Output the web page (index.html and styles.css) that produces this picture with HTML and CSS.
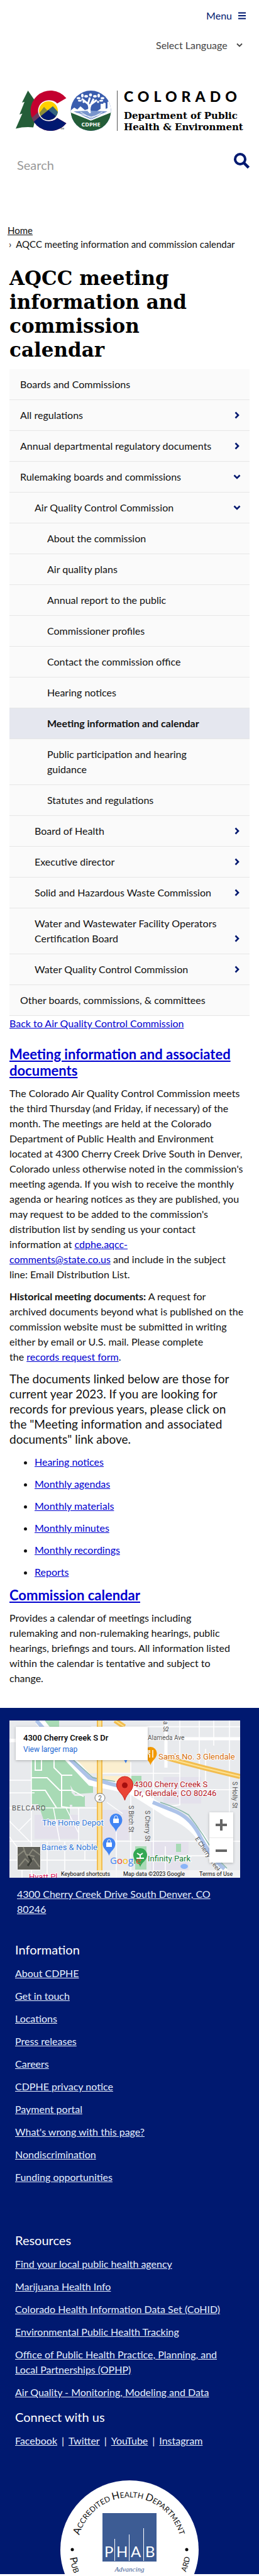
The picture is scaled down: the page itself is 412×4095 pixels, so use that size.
FILE: index.html
```html
<!DOCTYPE html>
<html lang="en">
<head>
<meta charset="utf-8">
<meta name="viewport" content="width=device-width, initial-scale=1">
<title>AQCC meeting information and commission calendar</title>
<link rel="stylesheet" href="styles.css">
</head>
<body>
<svg width="0" height="0" class="sprite" aria-hidden="true">
  <symbol id="right" viewBox="0 0 12 12"><path d="M3.5 1.5 8 6l-4.500 4.500" fill="none" stroke="#001970" stroke-width="2.600"/></symbol>
  <symbol id="down" viewBox="0 0 12 12"><path d="M1.500 3.500 6 8l4.500-4.500" fill="none" stroke="#001970" stroke-width="2.600"/></symbol>
</svg>
<header class="top">
  <button class="menu-btn" type="button">Menu
    <svg viewBox="0 0 12 12" width="12" height="12" aria-hidden="true"><path d="M0 1.500h12M0 6h12M0 10.500h12" stroke="#001970" stroke-width="2"/></svg>
  </button>
  <div class="lang">
    <select aria-label="Select Language"><option>Select Language</option></select>
    <svg viewBox="0 0 10 8" width="10" height="8" aria-hidden="true"><path d="M1 1.500 5 5.500l4-4" fill="none" stroke="#444" stroke-width="1.800"/></svg>
  </div>
  <a class="logo" href="#" aria-label="Colorado Department of Public Health and Environment">
    <svg viewBox="0 0 364 64">
      <defs>
        <clipPath id="cc"><path d="M80.500 12A32 32 0 1 0 80.500 52L66 43.500A16.500 16.500 0 1 1 66 20.500Z"/></clipPath>
        <clipPath id="sun"><circle cx="52" cy="32" r="15"/></clipPath>
        <clipPath id="seal"><circle cx="119.500" cy="32" r="32"/></clipPath>
      </defs>
      <path d="M19.500 0 10 19l4-1-8 20 4.500-1.500L0 60.500q14-3.500 28-2L36 24Z" fill="#245d38"/>
      <g clip-path="url(#cc)">
        <rect x="18" width="66" height="64" fill="#c3002f"/>
        <path d="M18 50 38 32v32H18Z" fill="#6d3a5d"/>
        <path d="M26 52 42 38 85 43v21H18Z" fill="#001970"/>
      </g>
      <circle cx="52" cy="32" r="16.500" fill="#fff"/>
      <g clip-path="url(#sun)">
        <rect x="36" y="16" width="32" height="32" fill="#ffd100"/>
        <path d="M34 40 45 26l6 6 8-7 12 13v12H34Z" fill="#8a8d3b"/>
        <path d="m50 32 9-7 12 13v8Z" fill="#35647e"/>
        <path d="m34 45 18-14 18 15v6H34Z" fill="#001970"/>
      </g>
      <text x="71" y="62" class="tm">TM</text>
      <g clip-path="url(#seal)">
        <rect x="87" width="65" height="64" fill="#3a5dae"/>
        <path d="m87 32 6-5 5 3 5-5 7 6 6-2 5 4h8l6-4v-8h4l1-2 3 1v9l3-1V18l5-2v15l4 1v6l-33 12-35-12Z" fill="#fff"/>
        <path d="m92 33 27-1 27 1-26 13Z" fill="#7895cc"/>
        <path d="m98 36 22 6 22-6M103 34l17 10 18-10" stroke="#fff" stroke-width="1" fill="none"/>
        <path d="M116 34q2-9-1-13l-10-8m10 8 3-10m0 12 11-8m-9 6 4-8m-6 23q-2-10 3-16" stroke="#fff" stroke-width="3" fill="none"/>
        <g fill="#fff"><ellipse cx="100" cy="12" rx="3" ry="1.800"/><ellipse cx="106" cy="8" rx="2" ry="3"/><ellipse cx="112" cy="9" rx="3" ry="2"/><circle cx="119" cy="7" r="2.400"/><ellipse cx="126" cy="9" rx="3" ry="2"/><ellipse cx="132" cy="8" rx="2" ry="3"/><ellipse cx="138" cy="12" rx="3" ry="1.800"/><ellipse cx="102" cy="16" rx="3" ry="1.500"/><ellipse cx="136" cy="16" rx="3" ry="1.500"/><circle cx="108" cy="18" r="1.700"/><circle cx="131" cy="18" r="1.700"/></g>
        <path d="m87 34 32.500 13L152 34v30H87Z" fill="#245d38"/>
        <path d="m87 34 32.500 13L152 34" stroke="#fff" stroke-width="1.500" fill="none"/>
      </g>
      <text x="119.500" y="57" text-anchor="middle" class="cdphe">CDPHE</text>
      <path d="M161.500 0v64" stroke="#555"/>
      <text x="172" y="18" class="co">COLORADO</text>
      <text x="172" y="45" class="dept">Department of Public</text>
      <text x="172" y="63" class="dept">Health &amp; Environment</text>
    </svg>
  </a>
  <form class="search">
    <input type="search" placeholder="Search" aria-label="Search">
    <button type="button" aria-label="Submit search"><svg viewBox="0 0 25 25" width="25" height="25"><circle cx="10" cy="10" r="8" fill="none" stroke="#001970" stroke-width="4"/><path d="m16 16 7.500 7.500" stroke="#001970" stroke-width="4.500"/></svg></button>
  </form>
</header>
<main>
  <nav class="crumbs" aria-label="Breadcrumb">
    <a href="#">Home</a>
    <span><b>›</b>AQCC meeting information and commission calendar</span>
  </nav>
  <h1>AQCC meeting<br>information and<br>commission<br>calendar</h1>
  <ul class="tree">
    <li><a href="#">Boards and Commissions</a></li>
    <li><a href="#">All regulations</a><button type="button" aria-label="Expand All regulations"><svg><use href="#right"/></svg></button></li>
    <li><a href="#">Annual departmental regulatory documents</a><button type="button" aria-label="Expand Annual documents"><svg><use href="#right"/></svg></button></li>
    <li><a href="#">Rulemaking boards and commissions</a><button type="button" aria-label="Collapse Rulemaking boards"><svg><use href="#down"/></svg></button></li>
    <li class="l2"><a href="#">Air Quality Control Commission</a><button type="button" aria-label="Collapse Air Quality"><svg><use href="#down"/></svg></button></li>
    <li class="l3"><a href="#">About the commission</a></li>
    <li class="l3"><a href="#">Air quality plans</a></li>
    <li class="l3"><a href="#">Annual report to the public</a></li>
    <li class="l3"><a href="#">Commissioner profiles</a></li>
    <li class="l3"><a href="#">Contact the commission office</a></li>
    <li class="l3"><a href="#">Hearing notices</a></li>
    <li class="l3 current"><a href="#" aria-current="page">Meeting information and calendar</a></li>
    <li class="l3"><a href="#">Public participation and hearing<br>guidance</a></li>
    <li class="l3"><a href="#">Statutes and regulations</a></li>
    <li class="l2"><a href="#">Board of Health</a><button type="button" aria-label="Expand Board of Health"><svg><use href="#right"/></svg></button></li>
    <li class="l2"><a href="#">Executive director</a><button type="button" aria-label="Expand Executive director"><svg><use href="#right"/></svg></button></li>
    <li class="l2"><a href="#">Solid and Hazardous Waste Commission</a><button type="button" aria-label="Expand Solid and Hazardous Waste"><svg><use href="#right"/></svg></button></li>
    <li class="l2"><a href="#">Water and Wastewater Facility Operators<br>Certification Board</a><button type="button" aria-label="Expand Certification Board"><svg><use href="#right"/></svg></button></li>
    <li class="l2"><a href="#">Water Quality Control Commission</a><button type="button" aria-label="Expand Water Quality"><svg><use href="#right"/></svg></button></li>
    <li><a href="#">Other boards, commissions, &amp; committees</a></li>
  </ul>
  <article>
    <a href="#">Back to Air Quality Control Commission</a>
    <h2 class="first"><a href="#">Meeting information and associated<br>documents</a></h2>
    <p>The Colorado Air Quality Control Commission meets<br>the third Thursday (and Friday, if necessary) of the<br>month. The meetings are held at the Colorado<br>Department of Public Health and Environment<br>located at 4300 Cherry Creek Drive South in Denver,<br>Colorado unless otherwise noted in the commission's<br>meeting agenda. If you wish to receive the monthly<br>agenda or hearing notices as they are published, you<br>may request to be added to the commission's<br>distribution list by sending us your contact<br>information at <a href="#">cdphe.aqcc-<br>comments@state.co.us</a> and include in the subject<br>line: Email Distribution List.</p>
    <p><strong>Historical meeting documents:</strong> A request for<br>archived documents beyond what is published on the<br>commission website must be submitted in writing<br>either by email or U.S. mail. Please complete<br>the <a href="#">records request form</a>.</p>
    <p class="note">The documents linked below are those for<br>current year 2023. If you are looking for<br>records for previous years, please click on<br>the "Meeting information and associated<br>documents" link above.</p>
    <ul class="docs">
      <li><a href="#">Hearing notices</a></li>
      <li><a href="#">Monthly agendas</a></li>
      <li><a href="#">Monthly materials</a></li>
      <li><a href="#">Monthly minutes</a></li>
      <li><a href="#">Monthly recordings</a></li>
      <li><a href="#">Reports</a></li>
    </ul>
    <h2><a href="#">Commission calendar</a></h2>
    <p>Provides a calendar of meetings including<br>rulemaking and non-rulemaking hearings, public<br>hearings, briefings and tours. All information listed<br>within the calendar is tentative and subject to<br>change.</p>
  </article>
</main>
<footer>
  <div class="map">
    <svg viewBox="0 0 367 250" preserveAspectRatio="xMidYMid slice">
      <rect width="367" height="250" fill="#e8eaed"/>
      <g fill="#e4e1ec"><path d="M145 142h45v48h-45ZM225 192h60v58h-60ZM40 150h70v38H40ZM245 90h60v42h-60Z"/></g>
      <g fill="#fbefd0"><path d="M108 60h84v24h-84ZM150 88h42v14h-42Z"/></g>
      <g fill="#a8dab5"><path d="M35 63h60l38 38v14l-28 2-8-14 2 12 22 22h-13v-3h-12v-1v24H54l-8-24H35ZM57 0h22v11H57ZM192 88h18v14h-18ZM200 200h18v37h-18ZM265 196h8v13h-8ZM100 120h20v17h-20Z"/></g>
      <g fill="none" stroke="#fff" stroke-width="2">
        <path d="M35 63v187M0 139h142M142 84h130M0 222h142M0 192h367M193 66v184M229 54v196M250 0v50M271 84v50l-25 4M302 0v110M350 0v190M271 0v84M325 0v40M312 45v60M0 30h15M0 95h35M0 115h40M130 10h237M215 110h150M240 215h80M248 200v50M70 139l10 53M90 139l20 40M110 139v53M88 192v58M15 175l20-20M0 160l35 35M0 185l30 40M20 222v28M120 192v30M60 192v58M155 130l25 18M170 150v100" stroke-width="1.500"/>
        <path d="M41 63v16h10V63M71 63v12l12 12h17M35 91h25l20 20h20l18 10M83 87v50l14 2M35 111h22l18 28"/>
        <path d="M190 29h177M0 32h12M249 0v75" stroke-width="5"/>
        <path d="M47 0 95 60l35 37 35 7 30 7 57 36q38 15 55 42 25 45 42 61" stroke-width="14"/>
      </g>
      <path d="M43 0 95 60l32 31 35 10 25 6M228 130l32 13q25 9 40 35 20 40 42 58" fill="none" stroke="#adc3e9" stroke-width="6"/>
      <path d="m90 52 43 39 35 6M240 130q25 8 45 20 22 28 46 70l15 15" fill="none" stroke="#8ab7ab" stroke-width="1.500"/>
      <path d="M143.500 0v250" stroke="#f2bd4f" stroke-width="9"/><path d="M143.500 0v250" stroke="#fde293" stroke-width="5"/>
      <path d="M168 0l15 10M245 58q60 17 122 31" fill="none" stroke="#f2bd4f" stroke-width="8"/><path d="M168 0l15 10M245 58q60 17 122 31" fill="none" stroke="#fde293" stroke-width="2"/>
      <ellipse cx="278" cy="232" rx="6" ry="4" fill="#8ab4f8"/>
      <rect x="136" y="116" width="16" height="14" rx="7" fill="#fff" stroke="#777"/><text x="144" y="127" text-anchor="middle" class="s">2</text>
      <g class="s"><text x="220" y="31">Alameda Ave</text><text x="4" y="143" class="area">BELCARO</text>
        <text transform="translate(190 135) rotate(90)">S Birch St</text><text transform="translate(216 143) rotate(90)">S Cherry St</text>
        <text transform="translate(355 97) rotate(90)">S Holly St</text><text transform="translate(245 1) rotate(90)">a St</text>
        <text transform="translate(295 188) rotate(56)">E Cherry Creek</text></g>
      <g>
        <path d="M185 68l4-8h-8Z" fill="#4285f4"/>
        <path d="M224.500 71c-2-8-10-10-10-19a10 10 0 0 1 20 0c0 9-8 11-10 19Z" fill="#f29900"/><path d="M221 47v5q0 2 2 2v5M223 47v5M228 47v12" stroke="#fff" stroke-width="1.500" fill="none"/>
        <path d="M169.500 177c-2-8-10-10-10-19a10 10 0 0 1 20 0c0 9-8 11-10 19ZM158.500 215c-2-8-10-10-10-19a10 10 0 0 1 20 0c0 9-8 11-10 19Z" fill="#4285f4"/>
        <path d="M165 156h9v7h-9ZM154 194h9v7h-9Z" fill="#fff"/><path d="M167 156v-2a2.500 2.500 0 0 1 5 0v2M156 194v-2a2.500 2.500 0 0 1 5 0v2" fill="none" stroke="#fff"/>
        <path d="M208 233c-2-8-11-10-11-19a11 11 0 0 1 22 0c0 9-9 11-11 19Z" fill="#34a853"/><path d="M202 219h12M203 211l5 3 4-3M208 214v4" stroke="#fff" stroke-width="2" fill="none"/>
      </g>
      <path d="M183.500 127c-3-12-13-14-13-25a13 13 0 0 1 26 0c0 11-10 13-13 25Z" fill="#ea4335" stroke="#c5221f"/><circle cx="183.500" cy="103" r="4.500" fill="#a50e0e"/>
      <g class="poi"><text x="237" y="62" fill="#d56e0c">Sam's No. 3 Glendale</text>
        <text x="198" y="106" fill="#b3141d">4300 Cherry Creek S</text><text x="198" y="120" fill="#b3141d">Dr, Glendale, CO 80246</text>
        <text x="52" y="167" fill="#3277d6">The Home Depot</text><text x="51" y="206" fill="#3277d6">Barnes &amp; Noble</text>
        <text x="220" y="224" fill="#188038">Infinity Park</text><text x="31" y="253" fill="#d81b60">Hyatt Pl</text></g>
      <text x="160" y="228" class="goog"><tspan fill="#4285f4">G</tspan><tspan fill="#ea4335">o</tspan><tspan fill="#fbbc04">o</tspan><tspan fill="#4285f4">g</tspan><tspan fill="#34a853">l</tspan><tspan fill="#ea4335">e</tspan></text>
      <rect x="12" y="200" width="38" height="38" rx="2" fill="#fff"/><rect x="13" y="201" width="36" height="36" fill="#61615a"/><path d="m13 215 10-8 6 10 8-12 12 9M15 232l10-12 8 8 5-9 10 14M22 201l4 12 14 3" fill="none" stroke="#8a897c" stroke-width="2"/><path d="m30 215 5 8-6 8" stroke="#3c3e38" stroke-width="3" fill="none"/>
      <path d="M81 238h286v12H81Z" fill="#f5f5f5" opacity=".8"/>
      <g class="legal"><text x="82" y="247">Keyboard shortcuts</text><text x="181" y="247">Map data ©2023 Google</text><text x="302" y="247">Terms of Use</text></g>
    </svg>
    <div class="card"><b>4300 Cherry Creek S Dr</b><a href="#">View larger map</a></div>
    <div class="zoom">
      <button type="button" aria-label="Zoom in"><svg viewBox="0 0 18 18"><path d="M0 9h18M9 0v18" stroke="#666" stroke-width="4"/></svg></button>
      <button type="button" aria-label="Zoom out"><svg viewBox="0 0 18 18"><path d="M0 9h18" stroke="#666" stroke-width="4"/></svg></button>
    </div>
  </div>
  <a class="addr" href="#">4300 Cherry Creek Drive South Denver, CO<br>80246</a>
  <section class="links">
    <h3>Information</h3>
    <ul>
      <li><a href="#">About CDPHE</a></li><li><a href="#">Get in touch</a></li><li><a href="#">Locations</a></li><li><a href="#">Press releases</a></li><li><a href="#">Careers</a></li><li><a href="#">CDPHE privacy notice</a></li><li><a href="#">Payment portal</a></li><li><a href="#">What's wrong with this page?</a></li><li><a href="#">Nondiscrimination</a></li><li><a href="#">Funding opportunities</a></li>
    </ul>
  </section>
  <section class="links res">
    <h3>Resources</h3>
    <ul>
      <li><a href="#">Find your local public health agency</a></li><li><a href="#">Marijuana Health Info</a></li><li><a href="#">Colorado Health Information Data Set (CoHID)</a></li><li><a href="#">Environmental Public Health Tracking</a></li><li><a href="#">Office of Public Health Practice, Planning, and<br>Local Partnerships (OPHP)</a></li><li><a href="#">Air Quality - Monitoring, Modeling and Data</a></li>
    </ul>
  </section>
  <section class="links con">
    <h3>Connect with us</h3>
    <p class="social"><a href="#">Facebook</a><i>|</i><a href="#">Twitter</a><i>|</i><a href="#">YouTube</a><i>|</i><a href="#">Instagram</a></p>
  </section>
  <div class="badge">
    <svg viewBox="0 0 220 149" width="220" height="149" role="img" aria-label="Accredited Health Department seal">
      <defs><path id="arc" d="M27 110A83 83 0 0 1 193 110"/><path id="arcL" d="M15 123A96 96 0 0 0 60 192"/><path id="arcR" d="M160 192A96 96 0 0 0 206 122"/></defs>
      <circle cx="110" cy="110" r="110" fill="#fff"/>
      <g class="ring">
        <text><textPath href="#arc" startOffset="50%" text-anchor="middle"><tspan class="cap">A</tspan>CCREDITED <tspan class="cap">H</tspan>EALTH <tspan class="cap">D</tspan>EPARTMENT</textPath></text>
        <text><textPath href="#arcL"><tspan class="cap">P</tspan>UB</textPath></text>
        <text><textPath href="#arcR" startOffset="100%" text-anchor="end">ARD</textPath></text>
      </g>
      <circle cx="19" cy="110" r="2.500"/><circle cx="201" cy="110" r="2.500"/>
      <rect x="67" y="52" width="86" height="77" fill="#3d5c94"/>
      <path d="M86.500 93v35M109.500 86v42M132.500 76v52" stroke="#fff"/>
      <g class="phab"><text x="70" y="122">P</text><text x="89" y="122">H</text><text x="112" y="122">A</text><text x="135" y="122">B</text></g>
      <text x="110" y="145" text-anchor="middle" class="adv">Advancing</text>
    </svg>
  </div>
</footer>
</body>
</html>
```
FILE: styles.css
```css
* { box-sizing: border-box; }
body { margin: 0; background: #fff; color: #111; font: 16px/24px "Trebuchet MS", Lato, sans-serif; }
button, input, select { font: inherit; border: 0; background: none; padding: 0; margin: 0; color: inherit; }
ul { list-style: none; margin: 0; padding: 0; }
h1, h2, h3, p { margin: 0; }
.sprite { position: absolute; }
.top { display: flex; flex-direction: column; padding: 13px 15px 74px 25px; }
.menu-btn { display: flex; align-items: center; gap: 10px; align-self: flex-end; margin-right: 6px; color: #001970; }
.lang { display: flex; align-items: center; gap: 14px; align-self: flex-end; height: 24px; margin: 23px 11px 0 0; color: #444; }
.lang select { appearance: none; }
.logo { margin: 60px 8px 0 0; }
.logo svg { display: block; width: 100%; }
.tm { font: 4px Lato, sans-serif; }
.cdphe { font: 700 9px "Open Sans", sans-serif; fill: #fff; }
.co { font: 900 23px Lato, sans-serif; letter-spacing: 7px; }
.dept { font: 700 15px "DejaVu Serif", serif; }
.search { display: flex; justify-content: space-between; margin-top: 35px; }
.search input { flex: 1; min-width: 0; padding-left: 2px; height: 38px; font-size: 20px; outline: 0; }
.search input::placeholder { color: #999; opacity: 1; }
.search button { height: 25px; }
.crumbs { display: flex; flex-direction: column; padding-left: 12px; line-height: 22px; font-size: 15px; }
.crumbs a { color: #111; align-self: flex-start; }
.crumbs b { font-weight: 400; margin: 0 7px 0 2px; }
h1 { margin: 24px 15px 12px; font: 700 31px/38px "DejaVu Serif", serif; color: #000; }
.tree { margin: 0 15px; background: #fafafa; }
.tree li { display: flex; align-items: flex-end; justify-content: space-between; padding: 12px 14px 12px 17px; border-bottom: 1px solid #e6e6e6; }
.tree .l2 { padding-left: 40px; }
.tree .l3 { padding-left: 60px; }
.tree .current { background: #e5e7ef; font-weight: 700; }
.tree a { color: #111; text-decoration: none; white-space: nowrap; }
.tree button { display: flex; align-items: center; height: 24px; width: 12px; }
.tree svg { width: 12px; height: 12px; display: block; }
article { padding: 0 15px; white-space: nowrap; }
a { color: #0000d0; }
h2 { font-size: 22px; line-height: 26px; }
h2.first { margin-top: 24px; }
p { margin-top: 11px; }
article p.note { font-size: 19px; }
.docs { padding: 12px 0 1px 40px; list-style: disc; }
.docs li { margin-bottom: 11px; }
footer { margin-top: 35px; padding-top: 20px; background: #001970; overflow: hidden; }
footer a { color: #e6f0ff; }
.map { position: relative; margin: 0 30px 0 15px; height: 250px; font-family: Roboto, sans-serif; overflow: hidden; }
.map > svg { display: block; width: 100%; height: 250px; }
.s { font-size: 10px; fill: #555; }
.area { font-size: 11px; letter-spacing: 1px; }
.poi { font-size: 13px; stroke: #fff; stroke-width: 2px; paint-order: stroke; }
.goog { font: 15px "Open Sans", sans-serif; }
.legal { font-size: 9px; }
.card { position: absolute; left: 10px; top: 10px; width: 210px; height: 53px; padding: 9px 12px; background: #fff; box-shadow: 0 1px 4px #0004; display: flex; flex-direction: column; font-size: 12px; line-height: 18px; color: #000; }
.card b { font-size: 13px; font-weight: 500; }
.card a { color: #1a66d2; text-decoration: none; }
.zoom { position: absolute; right: 11px; bottom: 24px; width: 38px; display: flex; flex-direction: column; background: #fff; box-shadow: 0 1px 4px #0004; }
.zoom button { height: 40px; padding: 11px 10px; }
.zoom button + button { border-top: 1px solid #e6e6e6; }
.zoom svg { display: block; width: 18px; height: 18px; }
.addr { display: block; margin: 14px 27px 0; white-space: nowrap; }
.links { padding: 0 24px; margin-top: 40px; color: #fff; white-space: nowrap; }
.links h3 { font-size: 20px; font-weight: 400; line-height: 24px; margin-bottom: 14px; }
.links li + li { margin-top: 12px; }
.res { margin-top: 76px; }
.con { margin-top: 15px; }
.social { display: flex; gap: 7px; margin: 0; }
.social i { font-style: normal; }
.badge { display: flex; justify-content: center; margin-top: 51px; }
.badge svg { display: block; }
.ring { font: 12px Lato, sans-serif; fill: #111; }
.cap { font-size: 16px; }
.phab { font: 24px Lato, sans-serif; fill: #fff; }
.adv { font: italic 11px "Liberation Serif", serif; fill: #3d5c94; }
```
